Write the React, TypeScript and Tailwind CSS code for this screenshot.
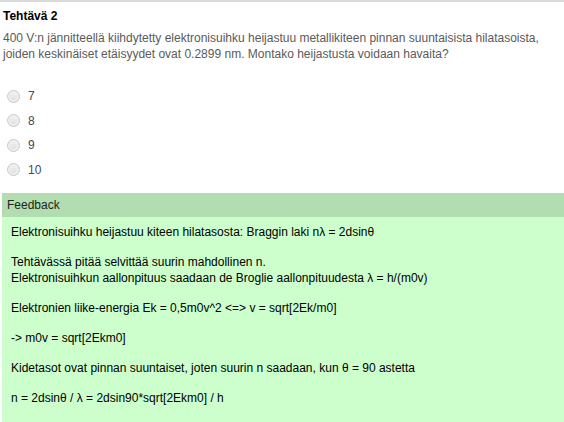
import React from 'react';

const options = ['7', '8', '9', '10'];

const feedback: string[][] = [
  ['Elektronisuihku heijastuu kiteen hilatasosta: Braggin laki nλ = 2dsinθ'],
  [
    'Tehtävässä pitää selvittää suurin mahdollinen n.',
    'Elektronisuihkun aallonpituus saadaan de Broglie aallonpituudesta λ = h/(m0v)',
  ],
  ['Elektronien liike-energia Ek = 0,5m0v^2 <=> v = sqrt[2Ek/m0]'],
  ['-> m0v = sqrt[2Ekm0]'],
  ['Kidetasot ovat pinnan suuntaiset, joten suurin n saadaan, kun θ = 90 astetta'],
  ['n = 2dsinθ / λ = 2dsin90*sqrt[2Ekm0] / h'],
];

const Radio: React.FC = () => (
  <span className="inline-block h-[13px] w-[13px] shrink-0 rounded-full border border-[#c8c8c8] bg-gradient-to-b from-[#f4f4f4] to-[#dcdcdc] shadow-[inset_0_0_0_2px_#efefef]" />
);

export default function App() {
  return (
    <div
      className="h-[422px] w-[564px] overflow-hidden bg-white border-t-2 border-[#dadada] text-[12px] leading-[16px]"
      style={{ fontFamily: '"Liberation Sans", Arial, sans-serif' }}
    >
      <div className="px-[3px] pt-[6px]">
        <h2 className="font-bold text-black">Tehtävä 2</h2>
        <p className="mt-[6px] text-[#5a5a5a]">
          400 V:n jännitteellä kiihdytetty elektronisuihku heijastuu metallikiteen pinnan suuntaisista hilatasoista,
          <br />
          joiden keskinäiset etäisyydet ovat 0.2899 nm. Montako heijastusta voidaan havaita?
        </p>
      </div>

      <div className="mt-[26px] flex flex-col gap-[8.5px] pl-[7px] text-[#4a4a4a]">
        {options.map((o) => (
          <label key={o} className="flex h-[16px] items-center gap-[8px]">
            <Radio />
            <span>{o}</span>
          </label>
        ))}
      </div>

      <div className="ml-[2px] mt-[15px] h-[229px] bg-[#ccffcc]">
        <div className="h-[24px] bg-[#b1ddb1] pl-[5px] pt-[4px] text-[#222]">Feedback</div>
        <div className="flex flex-col gap-[14px] px-[9px] pt-[7px] text-black">
          {feedback.map((para, i) => (
            <p key={i}>
              {para.map((line, j) => (
                <React.Fragment key={j}>
                  {j > 0 && <br />}
                  {line}
                </React.Fragment>
              ))}
            </p>
          ))}
        </div>
      </div>
    </div>
  );
}
